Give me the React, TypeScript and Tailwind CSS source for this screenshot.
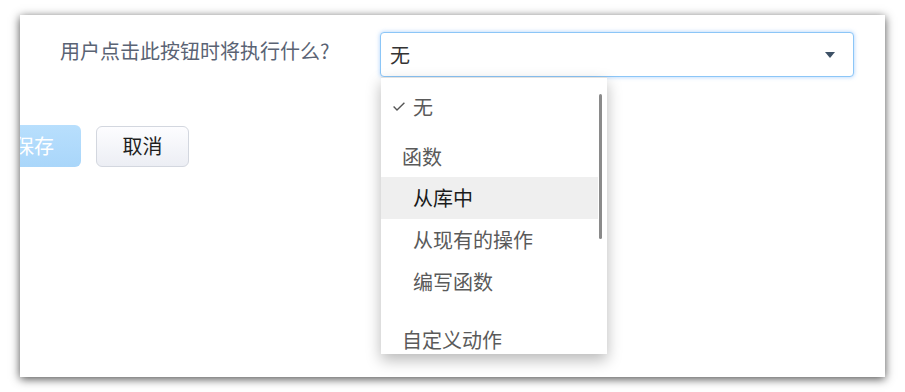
import React from "react";

const font = { fontFamily: '"Noto Sans CJK SC", "Noto Sans", sans-serif' };

export default function App() {
  return (
    <div
      className="w-[905px] h-[392px] bg-white pt-[15px] pl-[20px] overflow-hidden"
      style={font}
    >
      <div className="relative w-[865px] h-[362px] bg-white shadow-[0_2px_9px_rgba(0,0,0,0.7)]">
        <div className="w-full h-full overflow-hidden">
          <div className="flex items-start pt-[17px]">
            <div className="w-[360px] shrink-0 pl-[40px] pt-[5px] text-[20px] leading-[28px] text-[#5a6374] whitespace-nowrap">
              用户点击此按钮时将执行什么?
            </div>
            <div className="relative">
              <div className="w-[474px] h-[45px] rounded-[4px] border border-[#8cc6f7] shadow-[0_0_4px_rgba(100,170,250,0.55)] bg-white flex items-center justify-between pl-[9px] pr-[18px]">
                <span className="text-[20px] leading-[28px] text-[#333]">无</span>
                <svg width="10" height="6" viewBox="0 0 10 6">
                  <path d="M0 0 L10 0 L5 6 Z" fill="#3d5166" />
                </svg>
              </div>
            </div>
          </div>
          <div className="flex items-center mt-[48px] gap-[15px]">
            <div className="ml-[-33px] w-[94px] h-[42px] rounded-[6px] bg-gradient-to-b from-[#b8dffd] to-[#a9d6fa] flex items-center justify-center text-white text-[20px]">
              保存
            </div>
            <div className="w-[93px] h-[41px] rounded-[6px] border border-[#d3d7df] bg-gradient-to-b from-[#fdfdff] to-[#eceef4] flex items-center justify-center text-[#1e1e1e] text-[20px]">
              取消
            </div>
          </div>
        </div>
        <div className="absolute left-[361px] top-[62px] w-[226px] h-[277px] bg-white border-t border-[#e2e2e2] shadow-[0_6px_14px_rgba(0,0,0,0.28)] overflow-hidden">
          <div className="w-[217px] pt-[8px] text-[20px] leading-[28px] text-[#5a5a5a]">
            <div className="h-[42px] flex items-center pl-[12px]">
              <svg width="12" height="9" viewBox="0 0 12 9" className="mr-[8px] mt-[-2px]">
                <polyline points="0.6,4.6 4,8 11.4,0.8" fill="none" stroke="#555" strokeWidth="1.4" />
              </svg>
              <span>无</span>
            </div>
            <div className="h-[49px] pt-[15px] pl-[21px]">函数</div>
            <div className="h-[42px] flex items-center pl-[32px] bg-[#efefef] text-[#1a1a1a]">从库中</div>
            <div className="h-[42px] flex items-center pl-[32px]">从现有的操作</div>
            <div className="h-[42px] flex items-center pl-[32px]">编写函数</div>
            <div className="pt-[23px] pl-[21px]">自定义动作</div>
          </div>
          <div className="absolute left-[218px] top-[16px] w-[3px] h-[145px] rounded-full bg-[#8a8a8a]" />
        </div>
      </div>
    </div>
  );
}
